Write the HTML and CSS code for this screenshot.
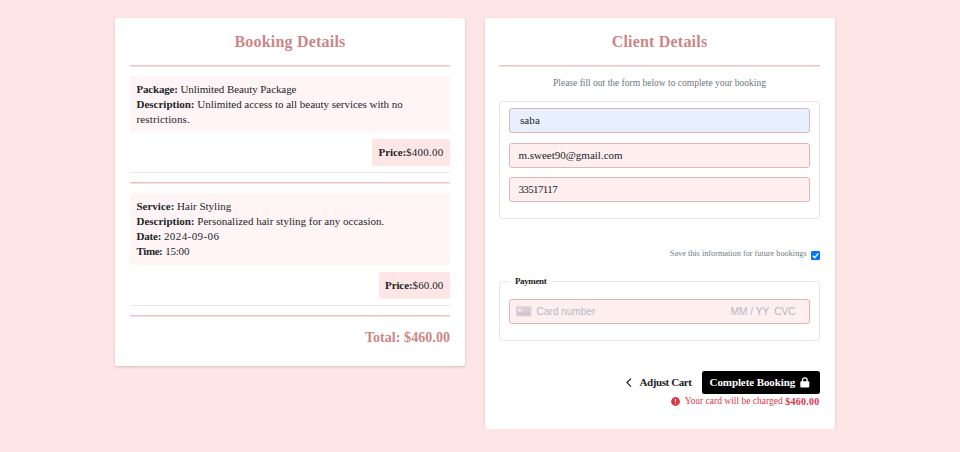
FILE: index.html
```html
<!DOCTYPE html>
<html lang="en">
<head>
<meta charset="utf-8">
<title>Complete Booking</title>
<link rel="stylesheet" href="styles.css">
</head>
<body>
<main class="checkout">
  <section class="card">
    <h2>Booking Details</h2>
    <hr class="rule">
    <div class="item">
      <p><b class="tight">Package:</b> <span class="name">Unlimited Beauty Package</span></p>
      <p><b>Description:</b> <span class="access">Unlimited access to all beauty services with no</span> <span class="loose">restrictions.</span></p>
    </div>
    <div class="price"><b>Price:</b><span class="amount">$400.00</span></div>
    <hr class="divider">
    <hr class="rule">
    <div class="item service">
      <p><b>Service:</b> Hair Styling</p>
      <p><b>Description:</b> Personalized hair styling for any occasion.</p>
      <p><b class="tight">Date:</b> <span class="date">2024-09-06</span></p>
      <p><b class="tighter">Time:</b> <span class="tight">15:00</span></p>
    </div>
    <div class="price"><b>Price:</b><span class="amount small">$60.00</span></div>
    <hr class="divider">
    <hr class="rule">
    <p class="total">Total: $460.00</p>
  </section>

  <section class="card client">
    <h2>Client Details</h2>
    <hr class="rule">
    <p class="hint">Please fill out the form below to complete your booking</p>
    <form>
      <div class="group contact">
        <div class="field filled">saba</div>
        <div class="field">m.sweet90@gmail.com</div>
        <div class="field phone">33517117</div>
      </div>
      <label class="save"><span>Save this information for future bookings</span>
        <svg width="9" height="9" viewBox="0 0 9 9"><rect width="9" height="9" rx="1.2" fill="#0075ff"/><path d="M1.8 4.7 3.7 6.6 7.3 2.4" fill="none" stroke="#fff" stroke-width="1.4"/></svg>
      </label>
      <fieldset class="group payment">
        <legend>Payment</legend>
        <div class="field stripe">
          <svg width="16" height="11" viewBox="0 0 16 11"><rect y=".3" width="15.5" height="10.2" rx="1.2" fill="#dbcfd8"/><rect x="1.7" y="2.8" width="3.7" height="2.5" rx=".6" fill="#f9ecee"/><path d="M1.7 7.7H14" stroke="#bdb5c2" stroke-width="1" stroke-dasharray="2.6 .6"/></svg>
          <span>Card number</span><span class="expiry">MM / YY</span><span class="cvc">CVC</span>
        </div>
      </fieldset>
      <div class="actions">
        <a class="back"><svg width="6" height="10" viewBox="0 0 6 10"><path d="M5 .6 1 4.6 5 8.6" fill="none" stroke="#212529" stroke-width="1.3"/></svg><span>Adjust Cart</span></a>
        <button type="button"><span>Complete Booking</span><svg width="10" height="11" viewBox="0 0 10 11"><rect x=".3" y="4.3" width="9" height="6.2" rx="1.1" fill="#fff"/><path d="M2.5 5V3.1a2.3 2.3 0 0 1 4.6 0V5" fill="none" stroke="#fff" stroke-width="1.3"/></svg></button>
      </div>
      <p class="charge"><svg width="9" height="9" viewBox="0 0 9 9"><circle cx="4.5" cy="4.5" r="4.4" fill="#dc3545"/><path d="M4.5 1.8V5" stroke="#fff" stroke-width="1.1"/><circle cx="4.5" cy="6.6" r=".7" fill="#fff"/></svg><span>Your card will be charged</span><b>$460.00</b></p>
    </form>
  </section>
</main>
</body>
</html>
```
FILE: styles.css
```css
* { box-sizing: border-box; }
body {
  margin: 0;
  background: #ffe6e6;
  color: #212529;
  font: 11px/15px "Liberation Serif", serif;
}
p, h2 { margin: 0; }
.checkout {
  display: grid;
  grid-template-columns: 350px 350px;
  column-gap: 19.6px;
  align-items: start;
  padding: 18px 0 0 115.4px;
}
.card {
  padding: 14px 15.4px 18px 14.6px;
  background: #fff;
  border-radius: 3px;
  box-shadow: 0 1px 3px rgba(80, 50, 50, .22);
}
.client { padding: 14px 15.4px 21px 14.4px; }
.card h2 {
  font-size: 16px;
  line-height: 20px;
  letter-spacing: .2px;
  text-align: center;
  color: #cd8686;
}
.rule {
  height: 2px;
  margin: 0 0 9px;
  border: 0;
  border-top: 1px solid #ebc3c6;
  background: #f8dfe1;
}
h2 + .rule { margin-top: 13px; }
.divider {
  height: 1px;
  margin: 6px 0 9px;
  border: 0;
  background: #e9e9ec;
}
.item {
  padding: 6px 6.5px 5px;
  background: #fff5f6;
  border-radius: 2.5px;
}
.service { padding-bottom: 6px; }
.price {
  width: fit-content;
  margin: 7px 0 0 auto;
  padding: 6px 6.5px;
  background: #ffe6e6;
  border-radius: 2.5px;
  line-height: 15px;
}
.price b { letter-spacing: -.1px; }
.amount { letter-spacing: .24px; }
.small { letter-spacing: .12px; }
.tight { letter-spacing: -.2px; }
.tighter { letter-spacing: -.4px; }
.name { letter-spacing: -.08px; }
.access { letter-spacing: -.03px; }
.loose { letter-spacing: .14px; }
.date { letter-spacing: .42px; }
.total {
  margin-top: 11px;
  font-size: 14px;
  line-height: 20px;
  font-weight: bold;
  letter-spacing: .06px;
  text-align: right;
  color: #cd8686;
}
.hint {
  padding-top: 1px;
  font-size: 9.5px;
  line-height: 13px;
  text-align: center;
  color: #6c757d;
}
.group {
  margin: 0;
  border: 1px solid #e7e7ea;
  border-radius: 3px;
}
.contact {
  display: grid;
  row-gap: 9.5px;
  height: 118px;
  margin-top: 11px;
  padding: 6px 9px;
  align-content: start;
}
.field {
  display: flex;
  align-items: center;
  height: 25px;
  padding: 0 8px;
  border: 1px solid #dfb4ba;
  border-radius: 3px;
  background: #ffefef;
}
.filled {
  padding-left: 9.5px;
  background: #e8f0fe;
  letter-spacing: .15px;
}
.phone { letter-spacing: -.62px; }
.save {
  display: flex;
  justify-content: flex-end;
  align-items: center;
  gap: 4px;
  height: 12px;
  margin-top: 30px;
  font-size: 8.25px;
  line-height: 10px;
  color: #747c83;
}
.save span { margin-top: -3px; }
.payment {
  min-width: 0;
  height: 65px;
  margin-top: 15px;
  padding: 12px 9px 0;
}
.payment legend {
  padding: 0 5.5px;
  font-size: 9px;
  font-weight: bold;
  line-height: 11px;
  letter-spacing: -.36px;
}
.stripe {
  padding: 0 13px 0 6px;
  color: #b3b8c6;
  font: 10.1px/15px "Liberation Sans", sans-serif;
}
.stripe svg { margin-right: 4px; }
.expiry { margin-left: auto; font-size: 10.2px; }
.cvc { margin-left: 5px; }
.actions {
  display: flex;
  justify-content: flex-end;
  align-items: center;
  margin-top: 30px;
  gap: 10px;
  font-weight: bold;
}
.back { display: flex; align-items: center; gap: 7.5px; }
.back span { letter-spacing: -.4px; }
.actions button {
  display: flex;
  align-items: center;
  justify-content: space-between;
  width: 118px;
  height: 23px;
  padding: 0 10px 0 8px;
  border: 0;
  border-radius: 2.5px;
  background: #000;
  color: #fff;
  font: bold 11px/15px "Liberation Serif", serif;
  letter-spacing: -.1px;
}
.charge {
  display: flex;
  justify-content: flex-end;
  align-items: center;
  margin-top: 1px;
  font-size: 9.5px;
  line-height: 13px;
  color: #dc3545;
}
.charge svg { margin-right: 4.5px; }
.charge b { margin-left: 2.5px; font-size: 10px; letter-spacing: .27px; }
```
